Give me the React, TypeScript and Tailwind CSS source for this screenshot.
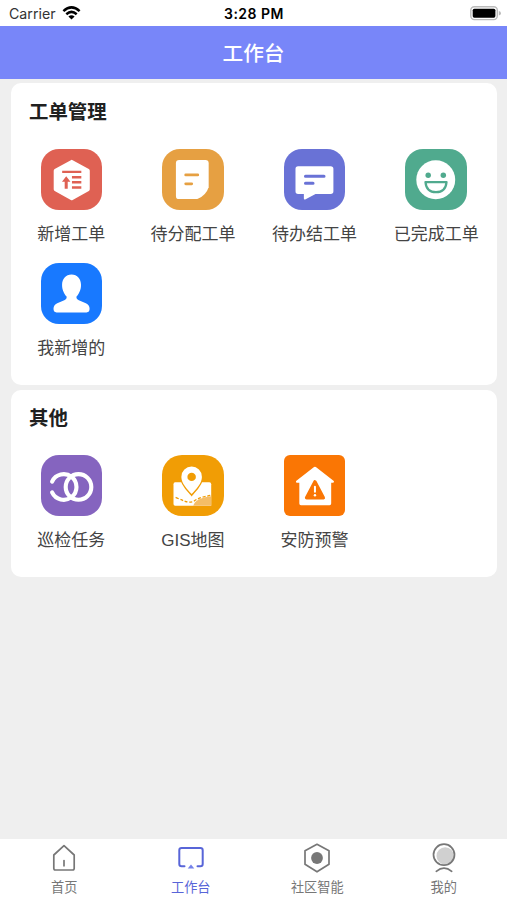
import type { ReactNode } from "react";

type Entry = { label: string; tile: string; icon: ReactNode };

const workOrders: Entry[] = [
  {
    label: "新增工单",
    tile: "rounded-[18px] bg-[#df6153]",
    icon: (
      <>
        <path d="M30.5 12.7 46.5 21.5V40L30.5 48.8 14.5 40V21.5Z" fill="#fff" stroke="#fff" strokeWidth="3.8" strokeLinejoin="round" />
        <path d="M21 22.7H40M30.7 28H40M30.7 33H40M30.7 38.2H40" stroke="#df6153" strokeWidth="2.3" />
        <path d="M25 27 29.2 32.5H26.5V39.5H23.5V32.5H20.8Z" fill="#df6153" />
      </>
    ),
  },
  {
    label: "待分配工单",
    tile: "rounded-[18px] bg-[#e6a042]",
    icon: (
      <>
        <path d="M17 11H43Q46.3 11 46.3 14.3V38Q43.5 46.5 35 49.7H17Q13.8 49.7 13.8 46.5V14.3Q13.8 11 17 11Z" fill="#fff" />
        <path d="M23.5 25.7H35.5M23.5 34.5H29.5" stroke="#e6a042" strokeWidth="2.7" strokeLinecap="round" />
      </>
    ),
  },
  {
    label: "待办结工单",
    tile: "rounded-[18px] bg-[#6972d6]",
    icon: (
      <>
        <path d="M14 17H46.3Q49 17 49 19.7V42Q49 44.7 46.3 44.7H31.3L21 50Q19.7 50.4 19.7 49V44.7H14Q11.4 44.7 11.4 42V19.7Q11.4 17 14 17Z" fill="#fff" />
        <path d="M21.3 27H39.7M21.3 34H28.8" stroke="#6972d6" strokeWidth="3" strokeLinecap="round" />
      </>
    ),
  },
  {
    label: "已完成工单",
    tile: "rounded-[18px] bg-[#50aa8e]",
    icon: (
      <>
        <circle cx="30.5" cy="30.5" r="19.3" fill="#fff" />
        <circle cx="23" cy="26" r="2.7" fill="#50aa8e" />
        <circle cx="38" cy="26" r="2.7" fill="#50aa8e" />
        <path d="M20.3 32.8H41.2Q40.3 42.8 30.7 42.8 21.2 42.8 20.3 32.8Z" fill="none" stroke="#50aa8e" strokeWidth="2.2" strokeLinejoin="round" />
      </>
    ),
  },
  {
    label: "我新增的",
    tile: "rounded-[18px] bg-[#1879ff]",
    icon: (
      <path d="M30.3 11.5C36 11.5 39.7 16 39.7 21.7 39.7 27 37.4 30.7 35.2 33.3Q34.8 35.8 37.5 37L44.5 40Q48.2 41.8 48.2 45.5 48.2 49 45.2 49H15.4Q12.4 49 12.4 45.5 12.4 41.8 16.1 40L23.1 37Q25.8 35.8 25.4 33.3C23.2 30.7 20.9 27 20.9 21.7 20.9 16 24.6 11.5 30.3 11.5Z" fill="#fff" />
    ),
  },
];

const others: Entry[] = [
  {
    label: "巡检任务",
    tile: "rounded-[18px] bg-[#8564bf]",
    icon: (
      <g fill="none" stroke="#fff" strokeWidth="4.1" strokeLinecap="round">
        <circle cx="37.2" cy="31.7" r="12.7" />
        <path d="M11 26.3A12.7 12.7 0 1 1 11 37.1" />
      </g>
    ),
  },
  {
    label: "GIS地图",
    tile: "rounded-[20px] bg-[#f19d05]",
    icon: (
      <>
        <path d="M13 27H47Q48.8 27 48.8 29V50.3H13Q11.4 50.3 11.4 48.7V29Q11.4 27 13 27Z" fill="#fff" />
        <path d="M31 50.3Q33 42.5 48.8 40.8V50.3Z" fill="#f4bd68" />
        <path d="M13.5 42Q19 44.5 23 46T31.5 46Q36 42 48.8 40" fill="none" stroke="#f19d05" strokeWidth="1.3" strokeDasharray="3 1.8" />
        <path d="M29.4 11.5A10.2 10.2 0 0 0 19.2 21.7C19.2 28 25 33.8 29.4 38.8 33.8 33.8 39.6 28 39.6 21.7A10.2 10.2 0 0 0 29.4 11.5Z" fill="#fff" stroke="#f19d05" strokeWidth="3" paintOrder="stroke" />
        <circle cx="29.4" cy="21.7" r="4.2" fill="#f19d05" />
      </>
    ),
  },
  {
    label: "安防预警",
    tile: "rounded-[6px] bg-[#fa7604]",
    icon: (
      <>
        <path d="M29.8 12Q30.7 11.5 31.6 12L49.4 25.8Q50.2 27.5 48.5 27.5H46.8V48.2Q46.8 49.8 45.2 49.8H16.8Q15.2 49.8 15.2 48.2V27.5H12.8Q11.2 27.5 12 25.8Z" fill="#fff" />
        <path d="M30.7 26.8 38.9 42.4H22.5Z" fill="#fa7604" stroke="#fa7604" strokeWidth="3.6" strokeLinejoin="round" />
        <path d="M30.7 31.5V36.5" stroke="#fff" strokeWidth="2" strokeLinecap="round" />
        <circle cx="30.7" cy="40" r="1.2" fill="#fff" />
      </>
    ),
  },
];

const tabs: { label: string; active?: boolean; icon: ReactNode }[] = [
  {
    label: "首页",
    icon: (
      <>
        <path d="M3.8 12 14 2.6 24.2 12V25.3Q24.2 27 22.5 27H5.5Q3.8 27 3.8 25.3Z" />
        <path d="M14 17.5V22.8" />
      </>
    ),
  },
  {
    label: "工作台",
    active: true,
    icon: (
      <>
        <path d="M7.5 23.3H4.6Q2.3 23.3 2.3 21V7.3Q2.3 5 4.6 5H23.4Q25.7 5 25.7 7.3V21Q25.7 23.3 23.4 23.3H20.5" strokeWidth="2" />
        <path d="M14 21.5 17.3 25.6H10.7Z" fill="#7582ea" stroke="none" />
      </>
    ),
  },
  {
    label: "社区智能",
    icon: (
      <>
        <path d="M14 1.3 26 7.7V21.3L14 28.8 2 21.3V7.7Z" />
        <circle cx="14" cy="15" r="5.9" fill="#777" stroke="none" />
      </>
    ),
  },
  {
    label: "我的",
    icon: (
      <>
        <circle cx="15.2" cy="12.9" r="8.7" fill="#d0d0d0" stroke="none" />
        <circle cx="14" cy="11.7" r="10.5" />
        <path d="M6.3 28.3Q14 21.8 21.7 28.3" />
      </>
    ),
  },
];

type SectionProps = { title: string; entries: Entry[]; className: string; headingClass: string };

function Section({ title, entries, className, headingClass }: SectionProps) {
  return (
    <section className={`rounded-[10px] bg-white ${className}`}>
      <h2 className={`pl-[18.5px] text-[19.4px] leading-7 font-bold text-[#202020] ${headingClass}`}>{title}</h2>
      <div className="grid grid-cols-4 gap-y-[15px]">
        {entries.map((entry) => (
          <div key={entry.label} className="flex h-[99px] flex-col items-center">
            <div className={`size-[61.5px] ${entry.tile}`}>
              <svg viewBox="0 0 61 61" className="size-full" fill="none">{entry.icon}</svg>
            </div>
            <span className="mt-[12.5px] text-[17px] leading-6 whitespace-nowrap text-[#444]">{entry.label}</span>
          </div>
        ))}
      </div>
    </section>
  );
}

export default function App() {
  return (
    <div className="flex h-[900px] w-[507px] flex-col overflow-hidden bg-[#efefef] font-['Liberation_Sans','Noto_Sans_CJK_SC',sans-serif]">
      <div className="grid h-[25.5px] shrink-0 grid-cols-3 items-center bg-white pt-[2px] pr-[6px] pl-[9px] font-[Inter,sans-serif] text-black">
        <div className="flex items-center gap-[6px]">
          <span className="text-[14.2px] text-[#333]">Carrier</span>
          <svg className="mb-[2px] h-[14px] w-[19px]" viewBox="0 0 18 14" fill="none" stroke="#000" strokeWidth="2.5">
            <path d="M.9 5.1Q9-2.4 17.1 5.1M3.8 8.2Q9 3.6 14.2 8.2" />
            <path d="M9 13.5 5.9 10.4Q9 7.9 12.1 10.4Z" fill="#000" stroke="none" />
          </svg>
        </div>
        <span className="pr-[2px] text-center text-[14px] font-semibold tracking-[0.5px] whitespace-nowrap">3:28 PM</span>
        <svg className="mb-[1px] h-[15px] w-[31px] justify-self-end" viewBox="0 0 31 15" fill="none">
          <rect x=".8" y=".8" width="26.5" height="12.8" rx="3.5" stroke="#bbb" strokeWidth="1.4" />
          <rect x="2.7" y="2.7" width="22.7" height="9" rx="1.6" fill="#000" />
          <path d="M28.8 5Q31 5.4 31 7.2T28.8 9.4Z" fill="#bbb" />
        </svg>
      </div>
      <header className="flex h-[53.5px] shrink-0 items-center justify-center bg-[#7886f9] pt-[2px] text-[20.7px] font-medium text-white">工作台</header>
      <main className="flex flex-1 flex-col gap-[5px] pt-[4px] pr-[10px] pl-[10.5px]">
        <Section title="工单管理" entries={workOrders} className="h-[302px]" headingClass="pt-[15px] mb-[22.5px]" />
        <Section title="其他" entries={others} className="h-[187px]" headingClass="pt-[14px] mb-[22.5px]" />
      </main>
      <nav className="grid h-[61px] shrink-0 grid-cols-4 bg-white pl-[1px]">
        {tabs.map((tab) => (
          <div key={tab.label} className={`flex flex-col items-center pt-[4px] ${tab.active ? "text-[#5865d8]" : "text-[#777]"}`}>
            <svg className="h-[30px] w-[28px]" viewBox="0 0 28 30" fill="none" stroke="currentColor" strokeWidth="1.7" strokeLinejoin="round" strokeLinecap="round">{tab.icon}</svg>
            <span className="mt-[5px] text-[13.2px] leading-5">{tab.label}</span>
          </div>
        ))}
      </nav>
    </div>
  );
}
